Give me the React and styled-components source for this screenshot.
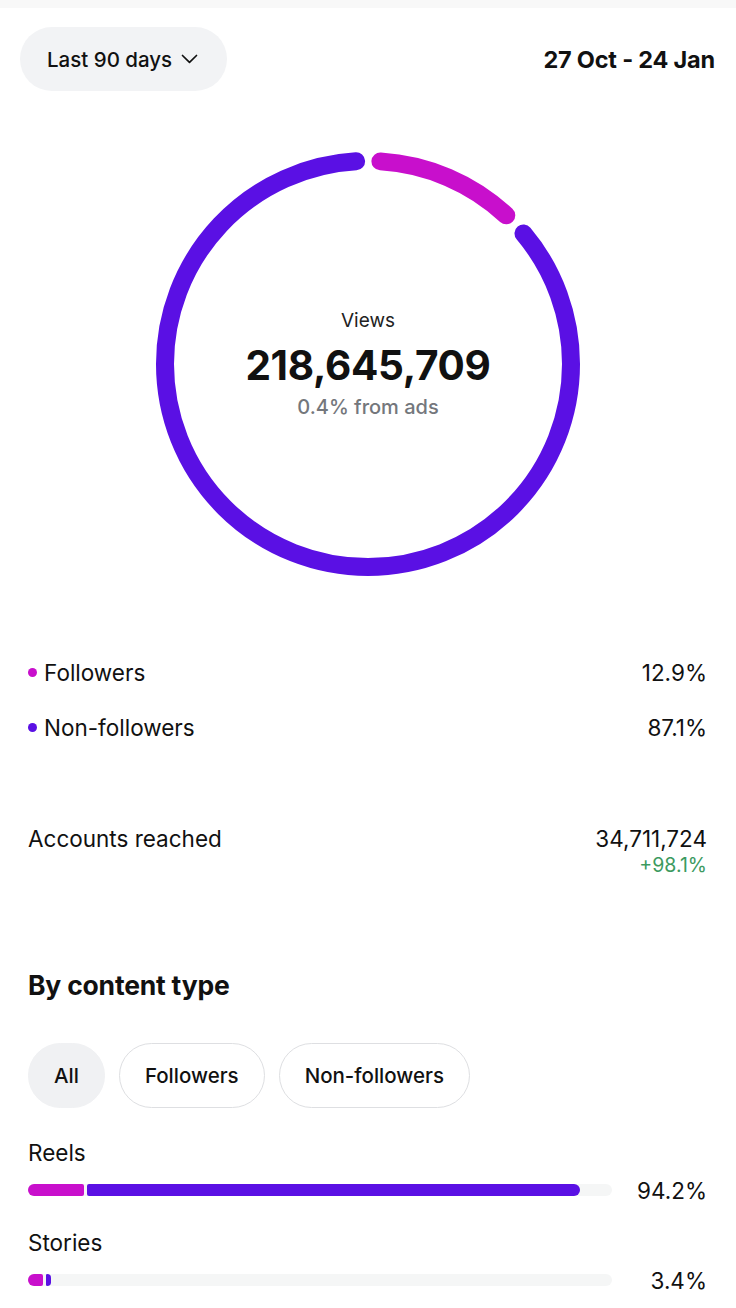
import React from "react";
import styled, { createGlobalStyle } from "styled-components";

const PINK = "#c80fcc";
const PURPLE = "#5a10e4";

const GlobalStyle = createGlobalStyle`
  html, body {
    margin: 0;
    padding: 0;
    background: #ffffff;
  }
  body {
    font-family: "Inter", "Noto Sans", "Liberation Sans", sans-serif;
    color: #111111;
    -webkit-font-smoothing: antialiased;
  }
`;

const Page = styled.div`
  box-sizing: border-box;
  width: 736px;
  min-height: 1308px;
  background: #ffffff;
  border-top: 8px solid #f8f8f8;
  overflow: hidden;
`;

const Header = styled.div`
  display: flex;
  justify-content: space-between;
  align-items: center;
  padding: 19px 21px 0 20px;
`;

const RangePill = styled.button`
  display: flex;
  align-items: center;
  gap: 9px;
  height: 64px;
  padding: 0 29px 0 27px;
  border: none;
  border-radius: 32px;
  background: #f2f3f5;
  font-family: inherit;
  font-size: 20.5px;
  font-weight: 500;
  color: #111111;
`;

const DateRange = styled.div`
  font-size: 23.5px;
  font-weight: 700;
  letter-spacing: -0.2px;
`;

const DonutWrap = styled.div`
  position: relative;
  width: 430px;
  height: 430px;
  margin: 58px auto 0;
  display: flex;
  flex-direction: column;
  align-items: center;
  justify-content: center;
`;

const DonutSvg = styled.svg`
  position: absolute;
  inset: 0;
`;

const ViewsLabel = styled.div`
  font-size: 19px;
  color: #222222;
  margin-top: -1px;
`;

const ViewsValue = styled.div`
  font-size: 40.5px;
  font-weight: 700;
  letter-spacing: -0.3px;
  margin-top: 10px;
  line-height: 48px;
`;

const ViewsSub = styled.div`
  font-size: 20px;
  font-weight: 500;
  color: #74777c;
  margin-top: 5px;
`;

const Content = styled.div`
  padding: 0 29px 0 28px;
`;

const Legend = styled.div`
  margin-top: 66px;
`;

const LegendRow = styled.div`
  display: flex;
  justify-content: space-between;
  align-items: center;
  height: 55px;
  font-size: 22.5px;
`;

const LegendName = styled.div`
  display: flex;
  align-items: center;
  gap: 7px;
`;

const Dot = styled.span`
  width: 9px;
  height: 9px;
  border-radius: 50%;
  background: ${(p) => p.color};
`;

const Reach = styled.div`
  display: flex;
  justify-content: space-between;
  align-items: flex-start;
  margin-top: 70px;
  font-size: 22.5px;
  line-height: 28px;
`;

const ReachValue = styled.div`
  text-align: right;
`;

const Growth = styled.div`
  font-size: 19.5px;
  line-height: 24px;
  color: #3c9a5f;
`;

const SectionTitle = styled.h2`
  margin: 92px 0 0;
  font-size: 26.5px;
  line-height: 32px;
  font-weight: 700;
  letter-spacing: -0.2px;
`;

const Chips = styled.div`
  display: flex;
  gap: 14px;
  margin-top: 42px;
`;

const Chip = styled.button`
  box-sizing: border-box;
  height: 65px;
  padding: 0 25px;
  border-radius: 33px;
  border: 1.5px solid ${(p) => (p.active ? "#f0f1f3" : "#dedfe2")};
  background: ${(p) => (p.active ? "#f0f1f3" : "#ffffff")};
  font-family: inherit;
  font-size: 20.5px;
  font-weight: 500;
  color: #111111;
`;

const TypeBlock = styled.div`
  margin-top: ${(p) => p.gap}px;
`;

const TypeLabel = styled.div`
  font-size: 22.5px;
  line-height: 26px;
`;

const BarRow = styled.div`
  display: grid;
  grid-template-columns: 584px 1fr;
  align-items: center;
  height: 28px;
  margin-top: 10px;
`;

const Track = styled.div`
  height: 12px;
  border-radius: 6px;
  background: #f5f6f6;
  display: flex;
`;

const Fill = styled.div`
  display: flex;
  gap: 3px;
  height: 100%;
`;

const Segment = styled.div`
  height: 100%;
  background: ${(p) => p.color};
  border-radius: ${(p) => (p.first ? "6px 2px 2px 6px" : "2px 6px 6px 2px")};
`;

const Percent = styled.div`
  text-align: right;
  font-size: 22.5px;
`;

const Chevron = () => (
  <svg width="17" height="10" viewBox="0 0 17 10" fill="none">
    <polyline
      points="1.5,1.5 8.5,8.3 15.5,1.5"
      stroke="#111"
      strokeWidth="1.7"
      strokeLinecap="round"
      strokeLinejoin="round"
    />
  </svg>
);

const R = 203;
const SW = 18;
const GAP = 7;
const C = 2 * Math.PI * R;

const donutParts = [
  { share: 0.129, color: PINK },
  { share: 0.871, color: PURPLE },
];

const Donut = () => {
  let start = 0;
  return (
    <DonutSvg width="430" height="430" viewBox="0 0 430 430">
      <g transform="rotate(-90 215 215)">
        {donutParts.map((part, key) => {
          const from = start * C + GAP / 2 + SW / 2;
          const len = part.share * C - GAP - SW;
          start += part.share;
          return (
            <circle
              key={key}
              cx="215"
              cy="215"
              r={R}
              fill="none"
              stroke={part.color}
              strokeWidth={SW}
              strokeLinecap="round"
              strokeDasharray={`${len} ${C}`}
              strokeDashoffset={-from}
            />
          );
        })}
      </g>
    </DonutSvg>
  );
};

const contentTypes = [
  { name: "Reels", value: "94.2%", fill: 94.5, pink: 10.2, gap: 32 },
  { name: "Stories", value: "3.4%", fill: 3.9, pink: 68, gap: 26 },
];

const App = () => {
  return (
    <>
      <GlobalStyle />
      <Page>
        <Header>
          <RangePill>
            Last 90 days
            <Chevron />
          </RangePill>
          <DateRange>27 Oct - 24 Jan</DateRange>
        </Header>

        <DonutWrap>
          <Donut />
          <ViewsLabel>Views</ViewsLabel>
          <ViewsValue>218,645,709</ViewsValue>
          <ViewsSub>0.4% from ads</ViewsSub>
        </DonutWrap>

        <Content>
          <Legend>
            <LegendRow>
              <LegendName>
                <Dot color={PINK} />
                Followers
              </LegendName>
              <span>12.9%</span>
            </LegendRow>
            <LegendRow>
              <LegendName>
                <Dot color={PURPLE} />
                Non-followers
              </LegendName>
              <span>87.1%</span>
            </LegendRow>
          </Legend>

          <Reach>
            <span>Accounts reached</span>
            <ReachValue>
              34,711,724
              <Growth>+98.1%</Growth>
            </ReachValue>
          </Reach>

          <SectionTitle>By content type</SectionTitle>

          <Chips>
            <Chip active>All</Chip>
            <Chip>Followers</Chip>
            <Chip>Non-followers</Chip>
          </Chips>

          {contentTypes.map((t) => (
            <TypeBlock key={t.name} gap={t.gap}>
              <TypeLabel>{t.name}</TypeLabel>
              <BarRow>
                <Track>
                  <Fill style={{ width: `${t.fill}%` }}>
                    <Segment first color={PINK} style={{ width: `${t.pink}%` }} />
                    <Segment color={PURPLE} style={{ flex: 1 }} />
                  </Fill>
                </Track>
                <Percent>{t.value}</Percent>
              </BarRow>
            </TypeBlock>
          ))}
        </Content>
      </Page>
    </>
  );
};

export default App;
